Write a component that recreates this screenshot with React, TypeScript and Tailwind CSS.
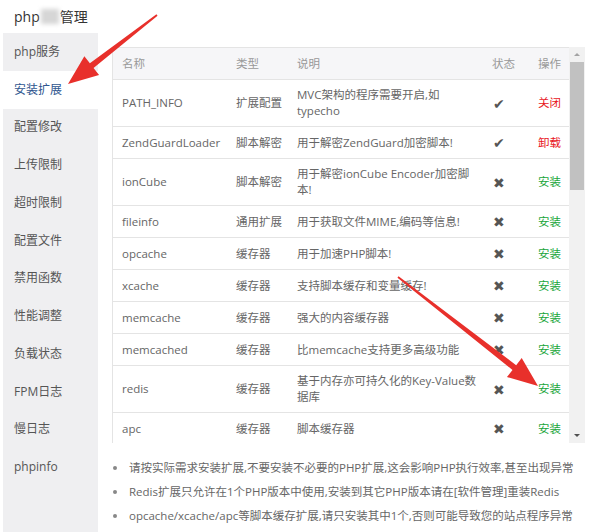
const font = { fontFamily: '"Open Sans", "Noto Sans CJK SC", sans-serif' };

type Row = {
	name: string;
	type: string;
	desc: string[];
	on: boolean;
	op: string;
};

const rows: Row[] = [
	{ name: "PATH_INFO", type: "扩展配置", desc: ["MVC架构的程序需要开启,如", "typecho"], on: true, op: "关闭" },
	{ name: "ZendGuardLoader", type: "脚本解密", desc: ["用于解密ZendGuard加密脚本!"], on: true, op: "卸载" },
	{ name: "ionCube", type: "脚本解密", desc: ["用于解密ionCube Encoder加密脚", "本!"], on: false, op: "安装" },
	{ name: "fileinfo", type: "通用扩展", desc: ["用于获取文件MIME,编码等信息!"], on: false, op: "安装" },
	{ name: "opcache", type: "缓存器", desc: ["用于加速PHP脚本!"], on: false, op: "安装" },
	{ name: "xcache", type: "缓存器", desc: ["支持脚本缓存和变量缓存!"], on: false, op: "安装" },
	{ name: "memcache", type: "缓存器", desc: ["强大的内容缓存器"], on: false, op: "安装" },
	{ name: "memcached", type: "缓存器", desc: ["比memcache支持更多高级功能"], on: false, op: "安装" },
	{ name: "redis", type: "缓存器", desc: ["基于内存亦可持久化的Key-Value数", "据库"], on: false, op: "安装" },
	{ name: "apc", type: "缓存器", desc: ["脚本缓存器"], on: false, op: "安装" },
];

const menu = ["php服务", "安装扩展", "配置修改", "上传限制", "超时限制", "配置文件", "禁用函数", "性能调整", "负载状态", "FPM日志", "慢日志", "phpinfo"];

const notes = [
	"请按实际需求安装扩展,不要安装不必要的PHP扩展,这会影响PHP执行效率,甚至出现异常",
	"Redis扩展只允许在1个PHP版本中使用,安装到其它PHP版本请在[软件管理]重装Redis",
	"opcache/xcache/apc等脚本缓存扩展,请只安装其中1个,否则可能导致您的站点程序异常",
];

// red annotation arrow: thin tapering shaft + triangular head
function Arrow(props: { x1: number; y1: number; x2: number; y2: number }) {
	const { x1, y1, x2, y2 } = props;
	const dx = x2 - x1;
	const dy = y2 - y1;
	const len = Math.sqrt(dx * dx + dy * dy);
	const ux = dx / len;
	const uy = dy / len;
	const nx = -uy;
	const ny = ux;
	const head = 30;
	const hw = 12;
	const bx = x2 - ux * head;
	const by = y2 - uy * head;
	const pts = [
		[x1 + nx * 0.9, y1 + ny * 0.9],
		[bx + nx * 3, by + ny * 3],
		[bx + nx * hw, by + ny * hw],
		[x2, y2],
		[bx - nx * hw, by - ny * hw],
		[bx - nx * 3, by - ny * 3],
		[x1 - nx * 0.9, y1 - ny * 0.9],
	]
		.map((p) => p.join(","))
		.join(" ");
	return <polygon points={pts} fill="#e8302b" />;
}

export default function App() {
	return (
		<div className="relative h-[532px] w-[590px] overflow-hidden bg-white text-[11.5px] text-[#666]" style={font}>
			<div className="flex h-[33px] items-center pl-[14px] text-[14px] text-[#333]">
				<span>php</span>
				<span className="mx-[1px] inline-block h-[15px] w-[18px] bg-[#d6d6d6] blur-[2px]" />
				<span>管理</span>
			</div>
			<div className="flex h-[499px]">
				<div className="ml-[3px] w-[95px] shrink-0 bg-[#efeff1] text-[12px]">
					{menu.map((m, i) => (
						<div
							key={m}
							className={
								i === 1
									? "-ml-[3px] flex h-[37.75px] w-[109px] items-center bg-white pl-[14px] text-[#30568f]"
									: "flex h-[37.75px] items-center pl-[11px] text-[#555]"
							}
						>
							{m}
						</div>
					))}
				</div>
				<div className="flex-1 pt-[14px] pl-[14px]">
					<div className="flex h-[396px]">
						<div className="w-[457px] overflow-hidden border-t border-l border-[#e4e4e4]">
							<div className="flex h-[32px] items-center border-b border-[#e4e4e4] bg-[#f6f6f8] text-[#999]">
								<div className="w-[115px] pl-[9px]">名称</div>
								<div className="w-[61px] pl-[8px]">类型</div>
								<div className="w-[195px] pl-[8px]">说明</div>
								<div className="w-[47px] pl-[8px]">状态</div>
								<div className="pl-[7px]">操作</div>
							</div>
							{rows.map((r) => (
								<div
									key={r.name}
									className={
										(r.desc.length > 1 ? "h-[47px] " : "h-[32px] ") +
										"flex items-center border-b border-[#e4e4e4] text-[#666]"
									}
								>
									<div className="w-[115px] pl-[9px]">{r.name}</div>
									<div className="w-[61px] pl-[8px]">{r.type}</div>
									<div className="w-[195px] whitespace-nowrap pl-[8px] leading-[16px]">
										{r.desc.map((d, i) => (
											<div key={i}>{d}</div>
										))}
									</div>
									<div className="w-[47px] pl-[9px] text-[14px] text-[#555]">{r.on ? "✔" : "✖"}</div>
									<div className={r.op === "安装" ? "pl-[7px] text-[#20a53a]" : "pl-[7px] text-[#e8161c]"}>{r.op}</div>
								</div>
							))}
						</div>
						<div className="flex w-[16px] flex-col items-center bg-[#f1f1f1]">
							<svg width="16" height="15" viewBox="0 0 16 15">
								<polygon points="5,9 11,9 8,6" fill="#a3a3a3" />
							</svg>
							<div className="h-[128px] w-[14px] bg-[#c1c1c1]" />
							<div className="flex-1" />
							<svg width="16" height="15" viewBox="0 0 16 15">
								<polygon points="5,6 11,6 8,9" fill="#505050" />
							</svg>
						</div>
					</div>
					<ul className="mt-[13px]">
						{notes.map((n) => (
							<li key={n} className="flex h-[24px] items-center whitespace-nowrap">
								<span className="mr-[12px] ml-[1px] h-[4px] w-[4px] rounded-full bg-[#888]" />
								<span>{n}</span>
							</li>
						))}
					</ul>
				</div>
			</div>
			<svg className="pointer-events-none absolute inset-0" width="590" height="532">
				<Arrow x1={157} y1={15} x2={68} y2={84} />
				<Arrow x1={398} y1={277} x2={538} y2={386} />
			</svg>
		</div>
	);
}
